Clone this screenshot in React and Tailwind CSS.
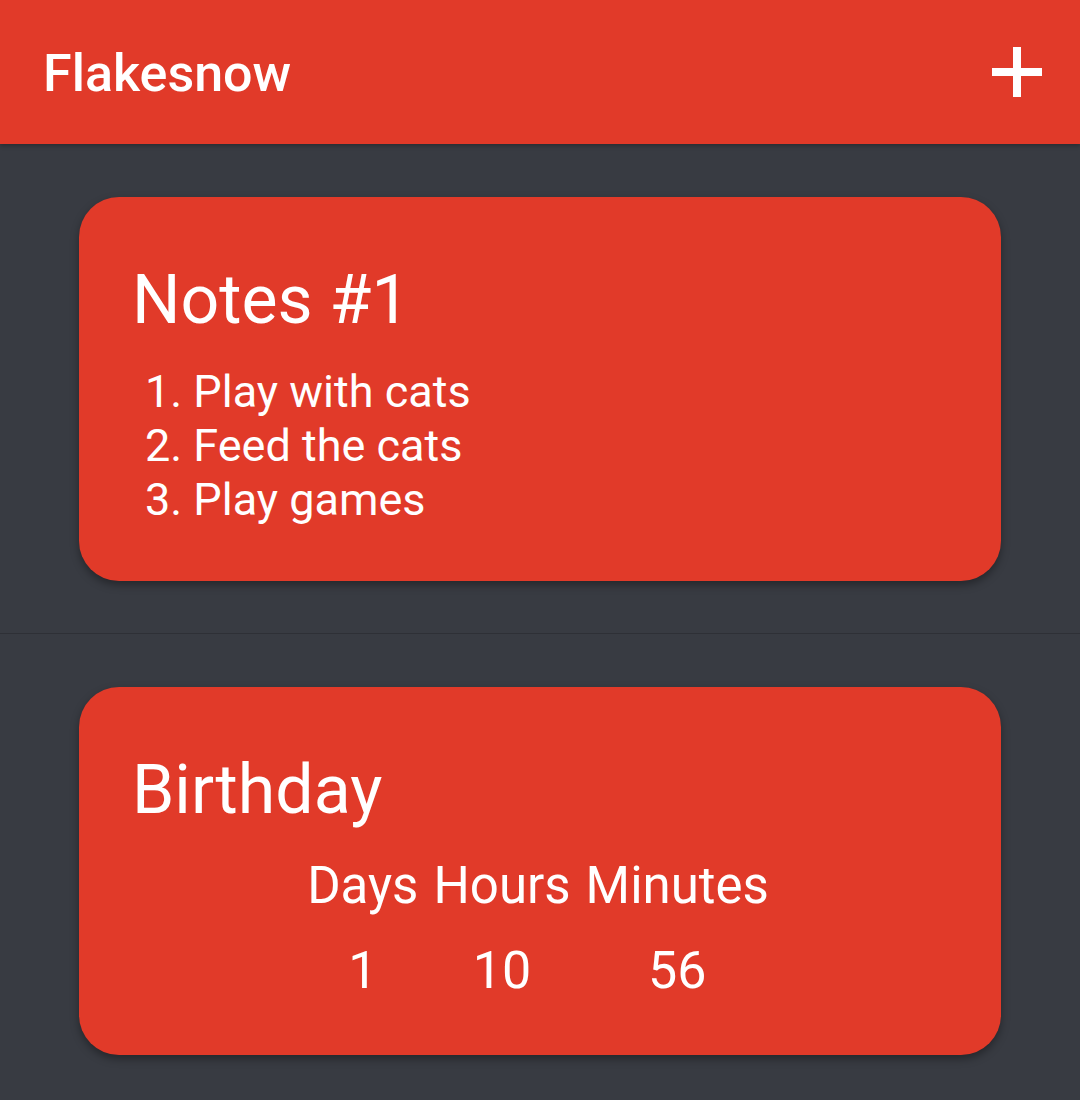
import React from "react";

const notes = ["Play with cats", "Feed the cats", "Play games"];

const countdown = [
  { label: "Days", value: 1 },
  { label: "Hours", value: 10 },
  { label: "Minutes", value: 56 },
];

const PlusIcon = () => (
  <svg width="50" height="50" viewBox="0 0 50 50" fill="#fff">
    <rect x="21" y="0" width="8" height="50" />
    <rect x="0" y="21" width="50" height="8" />
  </svg>
);

const Card = ({ title, children }) => (
  <div className="mx-[79px] rounded-[40px] bg-[#e13a29] pt-[63px] pb-[54px] pl-[53px] pr-[48px] text-white shadow-[0_4px_8px_rgba(0,0,0,0.35)]">
    <h2 className="text-[68px] leading-[80px] font-normal">{title}</h2>
    {children}
  </div>
);

const App = () => {
  return (
    <div
      className="min-h-screen bg-[#383b42]"
      style={{ fontFamily: "Roboto, 'Noto Sans', sans-serif" }}
    >
      <header className="h-[144px] bg-[#e13a29] flex items-center justify-between pl-[43px] pr-[38px] shadow-[0_2px_4px_rgba(0,0,0,0.25)]">
        <h1 className="text-[52px] font-medium text-white leading-[63px] pt-[3px]">
          Flakesnow
        </h1>
        <button className="flex items-center justify-center">
          <PlusIcon />
        </button>
      </header>

      <div className="pt-[53px] pb-[52px] border-b border-[#2e3036]">
        <Card title="Notes #1">
          <ol className="mt-[25px] pl-[13px] list-decimal list-inside text-[45px] leading-[54px]">
            {notes.map((n) => (
              <li key={n}>{n}</li>
            ))}
          </ol>
        </Card>
      </div>

      <div className="py-[53px]">
        <Card title="Birthday">
          <div className="mt-[26px] flex justify-center gap-[15px] pr-[9px]">
            {countdown.map((c) => (
              <div key={c.label} className="flex flex-col items-center">
                <span className="text-[51px] leading-[60px]">{c.label}</span>
                <span className="mt-[25px] text-[52px] leading-[60px]">
                  {c.value}
                </span>
              </div>
            ))}
          </div>
        </Card>
      </div>
    </div>
  );
};

export default App;
